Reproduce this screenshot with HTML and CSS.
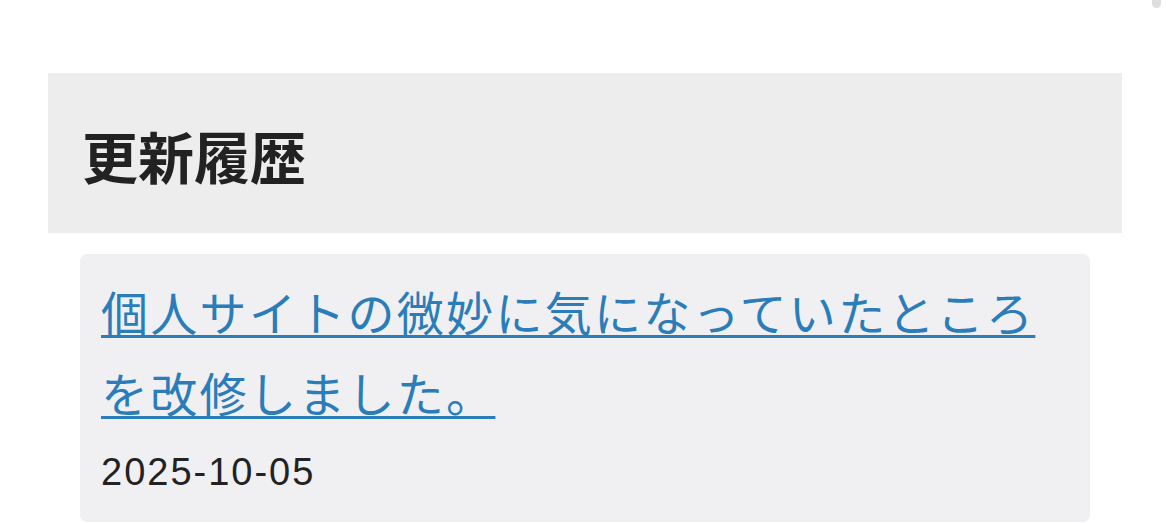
FILE: index.html
```html
<!DOCTYPE html>
<html lang="ja">
<head>
    <meta charset="utf-8">
    <meta name="viewport" content="width=device-width,initial-scale=1.0">
    <title>更新履歴</title>
    <link rel="stylesheet" href="styles.css">
</head>
<body>
    <div class="scroll-thumb"></div>
    <div class="container">
        <div class="section-head">
            <h2>更新履歴</h2>
        </div>
        <ul class="history">
            <li class="history-item">
                <a href="#">個人サイトの微妙に気になっていたところを改修しました。</a>
                <div class="date">2025-10-05</div>
            </li>
        </ul>
    </div>
</body>
</html>
```

FILE: styles.css
```css
* {
    margin: 0;
    padding: 0;
}

body {
    background: white;
    color: #222;
    font-family: "Liberation Sans", "Noto Sans CJK JP", sans-serif;
}

.scroll-thumb {
    position: absolute;
    top: -6px;
    left: 1152px;
    width: 9px;
    height: 14px;
    border-radius: 5px;
    background: #dedede;
}

.container {
    margin: 73px 48px 0;
}

.section-head {
    height: 160px;
    padding-left: 34px;
    background: #ededed;
    display: flex;
    align-items: center;
}

.section-head h2 {
    font-family: "Noto Sans CJK JP", sans-serif;
    font-size: 56px;
    font-weight: bold;
    line-height: 1;
    padding-top: 4px;
}

.history {
    list-style: none;
    margin: 21px 32px 0;
}

.history-item {
    background: #f0f0f2;
    border-radius: 7px;
    padding: 16px 21px 28px;
}

.history-item a {
    font-family: "Noto Sans CJK JP", sans-serif;
    font-size: 47px;
    line-height: 81px;
    letter-spacing: 2.3px;
    color: #2a7db9;
    text-decoration-thickness: 3px;
    text-underline-offset: 4px;
}

.date {
    margin-top: 18px;
    font-size: 38px;
    letter-spacing: 2px;
    line-height: 44px;
}
```
